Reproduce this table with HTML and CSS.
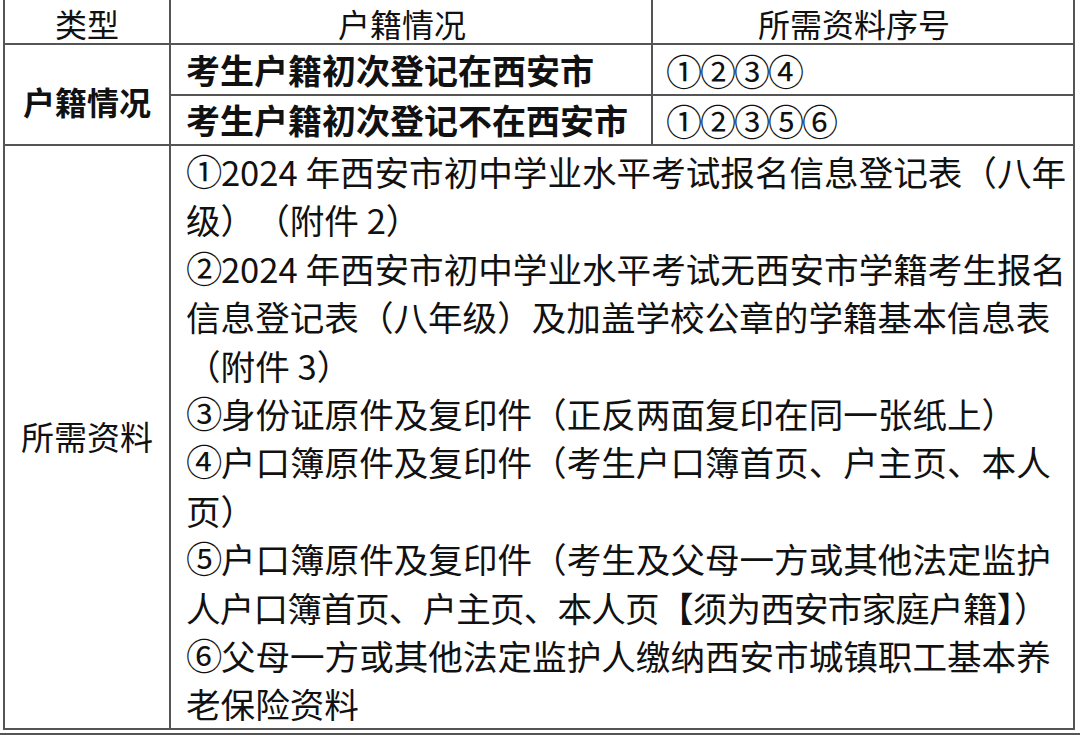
FILE: index.html
```html
<!DOCTYPE html>
<html lang="zh-CN">
<head>
<meta charset="utf-8">
<title>所需资料</title>
<link rel="stylesheet" href="styles.css">
</head>
<body>
<div class="sheet">
  <div class="cell head">类型</div>
  <div class="cell head head-wide">户籍情况</div>
  <div class="cell head head-wide">所需资料序号</div>
  <div class="cell label label-bold">户籍情况</div>
  <div class="cell case">考生户籍初次登记在西安市</div>
  <div class="cell nums">①②③④</div>
  <div class="cell case">考生户籍初次登记不在西安市</div>
  <div class="cell nums">①②③⑤⑥</div>
  <div class="cell label">所需资料</div>
  <div class="cell list">
    <p class="item"><span class="mark">①</span>2024 年西安市初中学业水平考试报名信息登记表（八年<br>级）（附件 2）</p>
    <p class="item"><span class="mark">②</span>2024 年西安市初中学业水平考试无西安市学籍考生报名<br>信息登记表（八年级）及加盖学校公章的学籍基本信息表<br>（附件 3）</p>
    <p class="item"><span class="mark">③</span>身份证原件及复印件（正反两面复印在同一张纸上）</p>
    <p class="item"><span class="mark">④</span>户口簿原件及复印件（考生户口簿首页、户主页、本人<br>页）</p>
    <p class="item"><span class="mark">⑤</span>户口簿原件及复印件（考生及父母一方或其他法定监护<br><span class="tight">人户口簿首页、户主页、本人页【须为西安市家庭户籍<span class="trim-end">】</span>）</span></p>
    <p class="item"><span class="mark">⑥</span>父母一方或其他法定监护人缴纳西安市城镇职工基本养<br>老保险资料</p>
  </div>
</div>
<div class="rule"></div>
</body>
</html>
```

FILE: styles.css
```css
html, body {
  margin: 0;
  padding: 0;
  background: #ffffff;
}

body {
  width: 1080px;
  height: 735px;
  overflow: hidden;
  font-family: "Noto Sans CJK SC", "Noto Sans", sans-serif;
  color: #111111;
  text-spacing-trim: space-all;
}

.sheet {
  display: grid;
  grid-template-columns: 164px 480px 420px;
  grid-template-rows: 43px 49px 48px auto;
  gap: 2px;
  width: fit-content;
  margin-left: 3px;
  padding: 0 2px 2px 2px;
  background: #555555;
}

.cell {
  background: #ffffff;
  display: flex;
  align-items: center;
  white-space: nowrap;
}

.head {
  justify-content: center;
  padding-top: 2px;
  font-size: 32px;
  font-weight: 400;
  line-height: 1;
}

.head-wide {
  padding-right: 18px;
}

.label {
  justify-content: center;
  font-size: 33px;
  line-height: 1;
}

.label-bold {
  grid-row: 2 / span 2;
  font-size: 32px;
  font-weight: 700;
  padding-top: 12px;
}

.case {
  padding-left: 15px;
  font-size: 34px;
  font-weight: 700;
  line-height: 1;
}

.nums {
  padding-left: 13px;
  font-size: 36px;
  letter-spacing: -2px;
  font-weight: 400;
  line-height: 1;
}

.list {
  grid-column: 2 / span 2;
  display: block;
  padding: 1px 10px 0 15px;
  font-size: 34.6px;
  line-height: 48.4px;
}

.item {
  margin: 0;
}

.mark {
  font-size: 1.05em;
  letter-spacing: -0.04em;
  line-height: 1;
}

.tight {
  letter-spacing: -0.8px;
}

.trim-end {
  letter-spacing: -0.5em;
}

.rule {
  margin-top: 3px;
  border-top: 2px solid #555555;
}
```
